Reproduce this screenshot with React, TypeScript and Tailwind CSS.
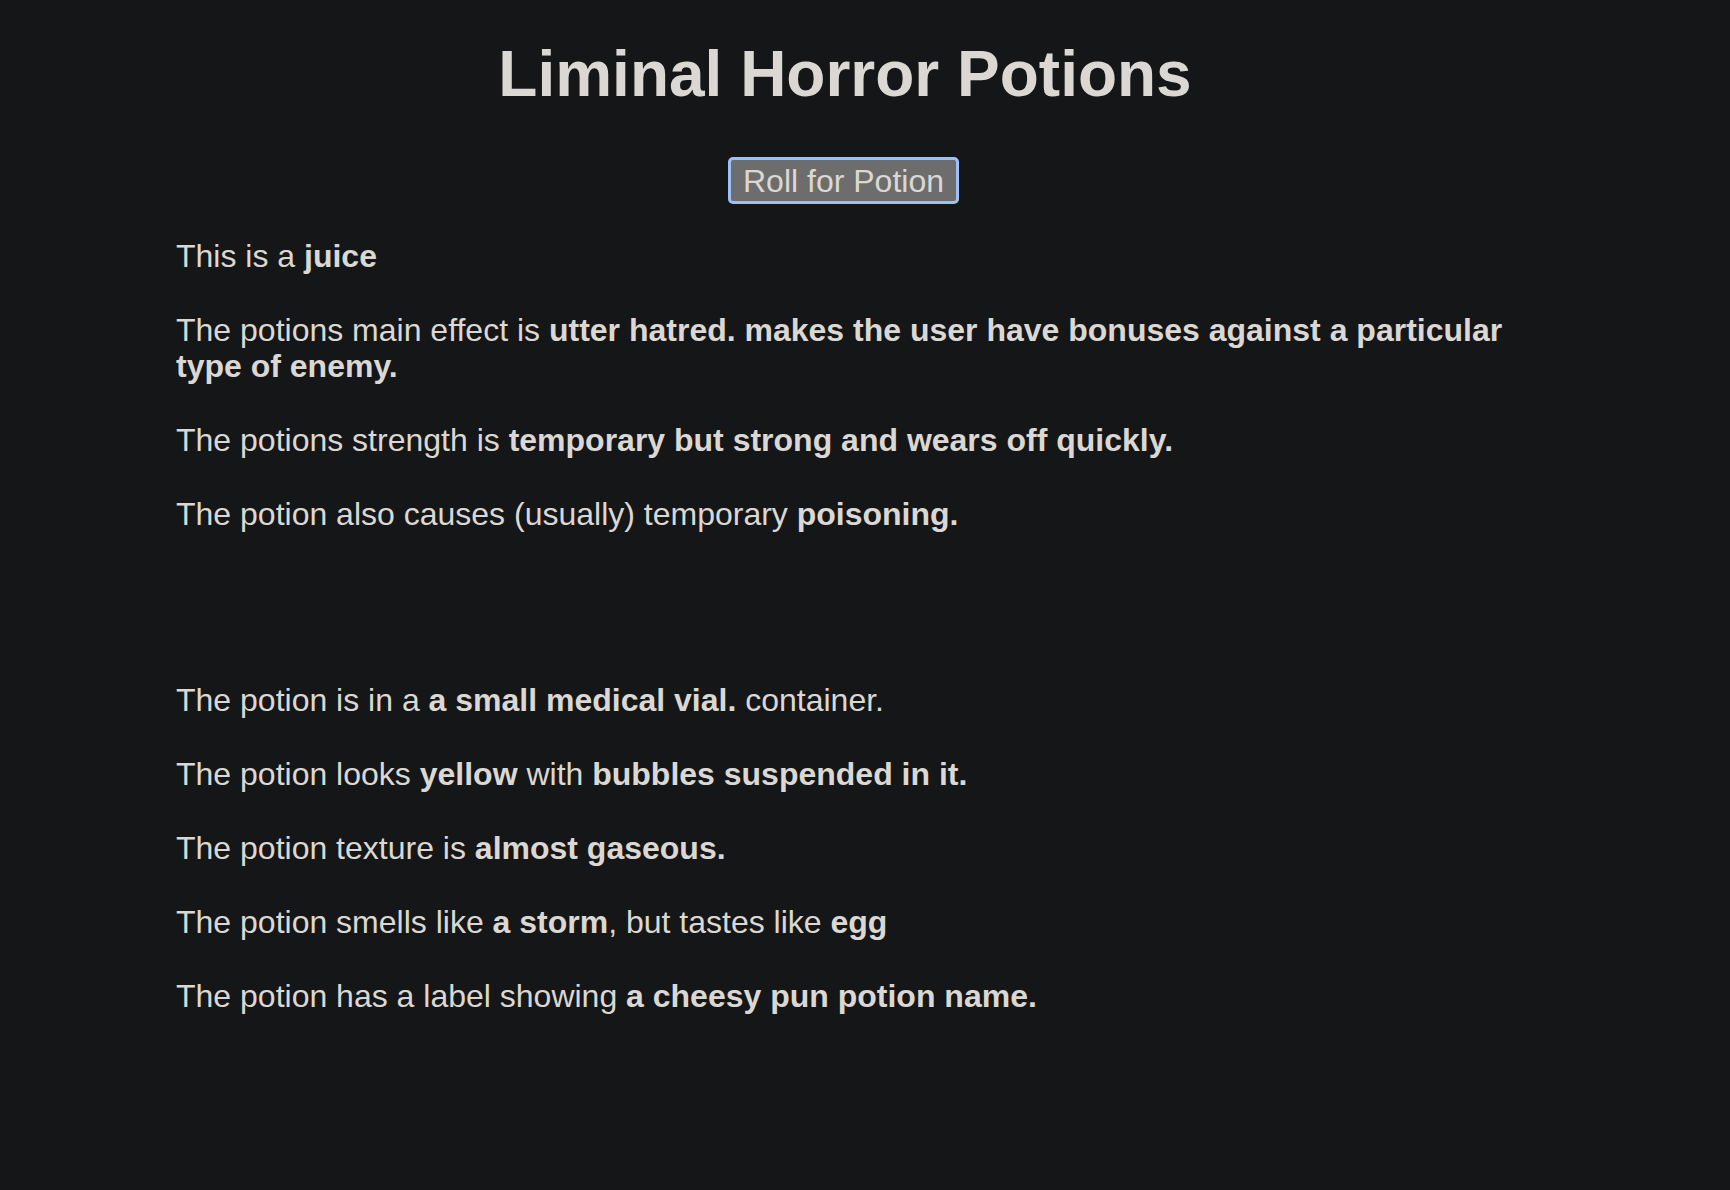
import React from 'react'

type Part = { text: string; bold?: boolean }

const lines: Part[][] = [
  [{ text: 'This is a ' }, { text: 'juice', bold: true }],
  [
    { text: 'The potions main effect is ' },
    { text: 'utter hatred. makes the user have bonuses against a particular type of enemy.', bold: true },
  ],
  [{ text: 'The potions strength is ' }, { text: 'temporary but strong and wears off quickly.', bold: true }],
  [{ text: 'The potion also causes (usually) temporary ' }, { text: 'poisoning.', bold: true }],
]

const details: Part[][] = [
  [{ text: 'The potion is in a ' }, { text: 'a small medical vial.', bold: true }, { text: ' container.' }],
  [
    { text: 'The potion looks ' },
    { text: 'yellow', bold: true },
    { text: ' with ' },
    { text: 'bubbles suspended in it.', bold: true },
  ],
  [{ text: 'The potion texture is ' }, { text: 'almost gaseous.', bold: true }],
  [
    { text: 'The potion smells like ' },
    { text: 'a storm', bold: true },
    { text: ', but tastes like ' },
    { text: 'egg', bold: true },
  ],
  [{ text: 'The potion has a label showing ' }, { text: 'a cheesy pun potion name.', bold: true }],
]

function Line({ parts }: { parts: Part[] }) {
  return (
    <p className="mb-[38px] text-[32px] leading-[36px]">
      {parts.map((p, i) =>
        p.bold ? (
          <strong key={i} className="font-bold">
            {p.text}
          </strong>
        ) : (
          <span key={i}>{p.text}</span>
        ),
      )}
    </p>
  )
}

export default function App() {
  return (
    <div
      className="min-h-[1190px] bg-[#151618] text-[#dbd8d3]"
      style={{ fontFamily: '"Liberation Sans", Arial, Helvetica, sans-serif' }}
    >
      <div className="ml-[176px] w-[1338px] pt-[36px]">
        <h1 className="text-center text-[64px] font-bold leading-[77px]">Liminal Horror Potions</h1>

        <div className="mt-[44px] flex justify-center pr-[3px]">
          <button className="h-[47px] w-[231px] rounded-[5px] border-[3px] border-[#9dc1f4] bg-[#6d6d6d] text-[32px] leading-none text-[#dbd8d3]">
            Roll for Potion
          </button>
        </div>

        <div className="mt-[34px]">
          {lines.map((l, i) => (
            <Line key={i} parts={l} />
          ))}
          <div className="h-[112px]" />
          {details.map((l, i) => (
            <Line key={i} parts={l} />
          ))}
        </div>
      </div>
    </div>
  )
}
